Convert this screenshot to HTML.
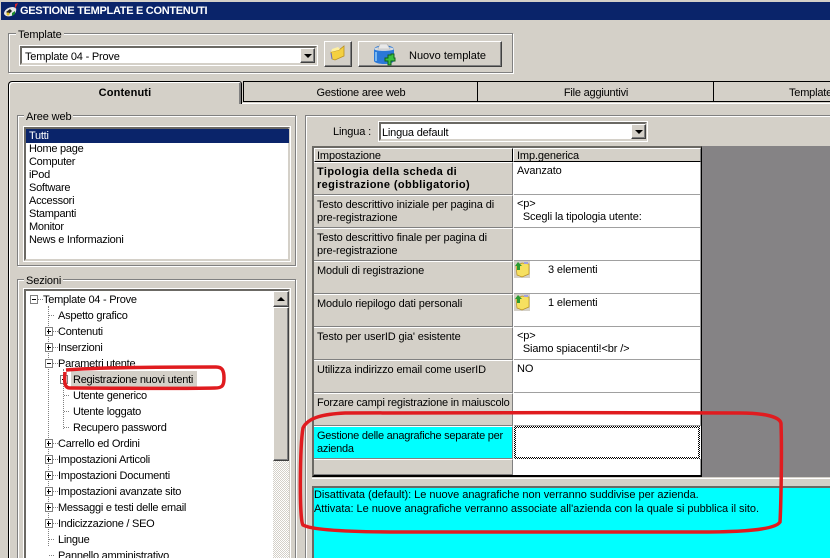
<!DOCTYPE html>
<html><head><meta charset="utf-8"><title>Gestione template e contenuti</title>
<style>
html,body{margin:0;padding:0;width:830px;height:558px;overflow:hidden}
body{background:#d4d0c8;font:11px/13px "Liberation Sans",sans-serif;color:#000;letter-spacing:-.13px}
#r{position:absolute;left:0;top:0;width:830px;height:558px;overflow:hidden;background:#d4d0c8}
#r div,#r span{position:absolute;box-sizing:border-box;white-space:nowrap}
svg{position:absolute;overflow:visible}
#r .g{border:1px solid #808080;box-shadow:inset 1px 1px 0 #fff,1px 1px 0 #fff}
#r .l{background:#d4d0c8;padding:0 2px;height:13px;margin-top:1px}
#r .sunk{background:#fff;border:2px solid;border-color:#6b6964 #d4d0c8 #d4d0c8 #6b6964;outline:1px solid #fff}
#r .btn{background:#d4d0c8;border:1px solid;border-color:#fff #404040 #404040 #fff;box-shadow:inset -1px -1px 0 #808080}
#r .arrow{width:0;height:0;border:4px solid transparent;border-top:4px solid #000;border-bottom:0}
#r .tab{top:81px;height:21px;border-top:1px solid #000;border-left:1px solid #000;border-bottom:1px solid #000;background:#d4d0c8;text-align:center;line-height:22px;letter-spacing:-.2px}
#r .cell{height:33px;padding:3px 3px 0;line-height:13px}
#r .n{left:314px;width:199px;background:#d4d0c8;border-top:1px solid #fff;border-bottom:1px solid #808080;border-right:1px solid #808080}
#r .v{left:514px;width:187px;background:#fff;border-bottom:1px solid #a0a0a0;border-right:1px solid #a0a0a0}
#r .i{left:29px;letter-spacing:-.27px;margin-top:1px}
#r .t{height:16px;line-height:16px;margin-top:1px;letter-spacing:-.25px}
#r .h{width:8px;height:9px;border:1px solid #808080;background:#fff}
#r .h:before{content:"";position:absolute;left:1px;top:3px;width:4px;height:1px;background:#000}
#r .p:after{content:"";position:absolute;left:2px;top:1px;width:1px;height:5px;background:#000}
#r .dh{height:1px;border-top:1px dotted #808080;width:5px}
#r .dv{width:1px;border-left:1px dotted #808080}
</style></head><body><div id="r">

<!-- title bar -->
<div style="left:1px;top:2px;width:829px;height:18px;background:#0a246a"></div>
<svg style="left:3px;top:3px" width="16" height="16" viewBox="0 0 16 16"><path d="M1 10c1-4 5-6 9-6l3 1c1 3-1 7-5 8-3 1-7 0-7-3z" fill="#e8e8e8"/><path d="M3 9l4-3 2 2-3 3z" fill="#222"/><path d="M9 10l3-2 0 3-3 2z" fill="#1a8a2a"/><path d="M12 1l3-1-3 6z" fill="#d8262a"/><circle cx="5" cy="11" r="1.5" fill="#e0c020"/></svg>
<div style="left:20px;top:5px;color:#fff;font-weight:bold;font-size:11px;letter-spacing:-.3px">GESTIONE TEMPLATE E CONTENUTI</div>

<!-- template group -->
<div class="g" style="left:8px;top:33px;width:505px;height:40px"></div>
<div class="l" style="left:16px;top:28px">Template</div>
<div class="sunk" style="left:20px;top:46px;width:297px;height:19px;padding:3px 3px 0;line-height:13px;letter-spacing:-.2px">Template 04 - Prove</div>
<div class="btn" style="left:300px;top:48px;width:15px;height:15px"><div class="arrow" style="left:3px;top:5px"></div></div>

<div class="btn" style="left:324px;top:41px;width:28px;height:26px"></div>
<svg style="left:329px;top:44px" width="18" height="18" viewBox="0 0 18 18"><path d="M2 8l8-2 5-4 0 10-9 4-3-1z" fill="#f4d040" stroke="#b89020" stroke-width=".8"/><path d="M2 8l1-3 6-2 2 2-1 1z" fill="#fff0a0"/><path d="M2 9l1 6" stroke="#6a70c0"/></svg>

<div class="btn" style="left:358px;top:41px;width:144px;height:26px"></div>
<svg style="left:373px;top:42px" width="24" height="24" viewBox="0 0 24 24"><path d="M1 7c2-5 18-5 20 0v12c-2 4-18 4-20 0z" fill="#2a78d8"/><path d="M1 7c2-3 18-3 20 0 0 2-18 3-20 0z" fill="#d8dce0"/><path d="M5 7l2-5h7l3 5z" fill="#e8e8e8" stroke="#b0b0b0" stroke-width=".6"/><path d="M3 10v9" stroke="#7ab8f0" stroke-width="2"/><path d="M15 13h3v-1h3v4h1v3h-4v4h-3v-4h-3v-3h3z" fill="#38c040" stroke="#106018" stroke-width="1"/></svg>
<div style="left:409px;top:50px;letter-spacing:0">Nuovo template</div>

<!-- tab panel -->
<div style="left:8px;top:90px;width:1px;height:468px;background:#000"></div>
<div style="left:9px;top:90px;width:1px;height:468px;background:#fff"></div>
<div class="tab" style="left:243px;width:235px">Gestione aree web</div>
<div class="tab" style="left:477px;width:237px">File aggiuntivi</div>
<div class="tab" style="left:713px;width:120px;text-align:left;padding-left:75px">Template</div>
<div style="left:242px;top:103px;width:588px;height:1px;background:#fff"></div>
<div style="left:8px;top:81px;width:234px;height:23px;background:#d4d0c8;border:1px solid #000;border-bottom:0;border-radius:4px 3px 0 0;box-shadow:inset 1px 1px 0 #fff,inset -2px 0 0 #808080;text-align:center;font-weight:bold;line-height:22px;font-size:11px;letter-spacing:.15px">Contenuti</div>

<!-- Aree web -->
<div class="g" style="left:17px;top:115px;width:279px;height:151px"></div>
<div class="l" style="left:24px;top:110px">Aree web</div>
<div class="sunk" style="left:24px;top:127px;width:266px;height:134px"></div>
<div style="left:26px;top:129px;width:263px;height:14px;background:#0a246a"></div>
<div class="i" style="top:129px;color:#fff">Tutti</div>
<div class="i" style="top:142px">Home page</div>
<div class="i" style="top:155px">Computer</div>
<div class="i" style="top:168px">iPod</div>
<div class="i" style="top:181px">Software</div>
<div class="i" style="top:194px">Accessori</div>
<div class="i" style="top:207px">Stampanti</div>
<div class="i" style="top:220px">Monitor</div>
<div class="i" style="top:233px">News e Informazioni</div>

<!-- Sezioni -->
<div class="g" style="left:17px;top:279px;width:279px;height:290px"></div>
<div class="l" style="left:24px;top:274px">Sezioni</div>
<div class="sunk" style="left:24px;top:289px;width:266px;height:280px"></div>
<div style="left:26px;top:291px;width:248px;height:267px;overflow:hidden">
 <div class="dv" style="left:22px;top:15px;height:240px"></div>
 <div class="dv" style="left:37px;top:78px;height:60px"></div>
 <div class="h" style="left:4px;top:4px"></div><div class="dh" style="left:12px;top:8px"></div>
 <div class="t" style="left:17px;top:0">Template 04 - Prove</div>
 <div class="dh" style="left:23px;top:24px"></div><div class="t" style="left:32px;top:16px">Aspetto grafico</div>
 <div class="h p" style="left:19px;top:36px"></div><div class="dh" style="left:27px;top:40px"></div><div class="t" style="left:32px;top:32px">Contenuti</div>
 <div class="h p" style="left:19px;top:52px"></div><div class="dh" style="left:27px;top:56px"></div><div class="t" style="left:32px;top:48px">Inserzioni</div>
 <div class="h" style="left:19px;top:68px"></div><div class="dh" style="left:27px;top:72px"></div><div class="t" style="left:32px;top:64px">Parametri utente</div>
 <div class="h p" style="left:34px;top:84px"></div>
 <div style="left:45px;top:80px;width:126px;height:16px;background:#d4d0c8"></div>
 <div class="t" style="left:47px;top:80px">Registrazione nuovi utenti</div>
 <div class="dh" style="left:38px;top:104px"></div><div class="t" style="left:47px;top:96px">Utente generico</div>
 <div class="dh" style="left:38px;top:120px"></div><div class="t" style="left:47px;top:112px">Utente loggato</div>
 <div class="dh" style="left:38px;top:136px"></div><div class="t" style="left:47px;top:128px">Recupero password</div>
 <div class="h p" style="left:19px;top:148px"></div><div class="dh" style="left:27px;top:152px"></div><div class="t" style="left:32px;top:144px">Carrello ed Ordini</div>
 <div class="h p" style="left:19px;top:164px"></div><div class="dh" style="left:27px;top:168px"></div><div class="t" style="left:32px;top:160px">Impostazioni Articoli</div>
 <div class="h p" style="left:19px;top:180px"></div><div class="dh" style="left:27px;top:184px"></div><div class="t" style="left:32px;top:176px">Impostazioni Documenti</div>
 <div class="h p" style="left:19px;top:196px"></div><div class="dh" style="left:27px;top:200px"></div><div class="t" style="left:32px;top:192px">Impostazioni avanzate sito</div>
 <div class="h p" style="left:19px;top:212px"></div><div class="dh" style="left:27px;top:216px"></div><div class="t" style="left:32px;top:208px">Messaggi e testi delle email</div>
 <div class="h p" style="left:19px;top:228px"></div><div class="dh" style="left:27px;top:232px"></div><div class="t" style="left:32px;top:224px">Indicizzazione / SEO</div>
 <div class="dh" style="left:23px;top:248px"></div><div class="t" style="left:32px;top:240px">Lingue</div>
 <div class="dh" style="left:23px;top:264px"></div><div class="t" style="left:32px;top:256px">Pannello amministrativo</div>
</div>
<!-- tree scrollbar -->
<div style="left:273px;top:291px;width:16px;height:267px;background-image:repeating-conic-gradient(#fff 0 25%,#d4d0c8 0 50%);background-size:2px 2px"></div>
<div class="btn" style="left:273px;top:291px;width:16px;height:16px"><div style="left:3px;top:5px;width:0;height:0;border:4px solid transparent;border-bottom:4px solid #000;border-top:0"></div></div>
<div class="btn" style="left:273px;top:307px;width:16px;height:154px"></div>

<!-- right panel -->
<div style="left:305px;top:115px;width:525px;height:1px;background:#808080"></div>
<div style="left:305px;top:115px;width:1px;height:443px;background:#808080"></div>
<div style="left:306px;top:116px;width:524px;height:1px;background:#fff"></div>
<div style="left:306px;top:116px;width:1px;height:442px;background:#fff"></div>
<div style="left:333px;top:126px">Lingua :</div>
<div class="sunk" style="left:379px;top:122px;width:268px;height:19px;padding:3px 1px 0;line-height:13px;letter-spacing:-.2px">Lingua default</div>
<div class="btn" style="left:631px;top:124px;width:15px;height:15px"><div class="arrow" style="left:3px;top:5px"></div></div>

<!-- grid -->
<div style="left:702px;top:146px;width:128px;height:331px;background:#858385"></div>
<div style="left:312px;top:146px;width:390px;height:331px;background:#fff;border:solid;border-width:2px 1px 2px 2px;border-color:#6b6964 #000 #000 #6b6964"></div>
<div style="left:314px;top:148px;width:199px;height:14px;background:#d4d0c8;border-top:1px solid #fff;border-left:1px solid #fff;border-right:1px solid #000;border-bottom:1px solid #000;padding-left:2px;line-height:14px">Impostazione</div>
<div style="left:513px;top:148px;width:188px;height:14px;background:#d4d0c8;border-top:1px solid #fff;border-left:1px solid #fff;border-right:1px solid #808080;border-bottom:1px solid #000;padding-left:3px;line-height:14px">Imp.generica</div>

<div class="n cell" style="top:162px;font-weight:bold;letter-spacing:.38px">Tipologia della scheda di<br>registrazione (obbligatorio)</div><div class="v cell" style="top:162px">Avanzato</div>
<div class="n cell" style="top:195px">Testo descrittivo iniziale per pagina di<br>pre-registrazione</div><div class="v cell" style="top:195px;white-space:pre">&lt;p&gt;
  Scegli la tipologia utente:</div>
<div class="n cell" style="top:228px">Testo descrittivo finale per pagina di<br>pre-registrazione</div><div class="v cell" style="top:228px"></div>
<div class="n cell" style="top:261px">Moduli di registrazione</div><div class="v cell" style="top:261px"><span style="left:34px;top:3px">3 elementi</span></div>
<div class="n cell" style="top:294px">Modulo riepilogo dati personali</div><div class="v cell" style="top:294px"><span style="left:34px;top:3px">1 elementi</span></div>
<div class="n cell" style="top:327px">Testo per userID gia' esistente</div><div class="v cell" style="top:327px;white-space:pre">&lt;p&gt;
  Siamo spiacenti!&lt;br /&gt;</div>
<div class="n cell" style="top:360px">Utilizza indirizzo email come userID</div><div class="v cell" style="top:360px">NO</div>
<div class="n cell" style="top:393px;letter-spacing:-.2px">Forzare campi registrazione in maiuscolo</div><div class="v cell" style="top:393px"></div>
<div class="n cell" style="top:426px;background:#00ffff;letter-spacing:-.25px">Gestione delle anagrafiche separate per<br>azienda</div>
<div style="left:514px;top:426px;width:186px;height:33px;background-image:repeating-conic-gradient(#000 0 25%,#fff 0 50%);background-size:2px 2px"></div>
<div style="left:516px;top:428px;width:182px;height:29px;background:#fff"></div>
<div class="n" style="top:459px;height:16px"></div><div class="v" style="top:459px;height:16px;border-bottom:0"></div>

<svg style="left:514px;top:261px" width="16" height="17" viewBox="0 0 16 17"><rect width="16" height="17" fill="#d4d0c8"/><path d="M2 5l6-3 7 1v10l-7 3-5-2z" fill="#f6e060" stroke="#b89020" stroke-width=".7"/><path d="M4 1l-3 4 2 0 0 4 3 0 0-4 2 0z" fill="#2a9a30"/><path d="M10 1h4v2h-4z" fill="#a0a0e0"/></svg>
<svg style="left:514px;top:294px" width="16" height="17" viewBox="0 0 16 17"><rect width="16" height="17" fill="#d4d0c8"/><path d="M2 5l6-3 7 1v10l-7 3-5-2z" fill="#f6e060" stroke="#b89020" stroke-width=".7"/><path d="M4 1l-3 4 2 0 0 4 3 0 0-4 2 0z" fill="#2a9a30"/><path d="M10 1h4v2h-4z" fill="#a0a0e0"/></svg>

<!-- splitter + description -->
<div style="left:312px;top:478px;width:518px;height:1px;background:#fff"></div>
<div style="left:312px;top:486px;width:518px;height:72px;background:#00ffff;border-left:2px solid #6b6964;border-top:2px solid #6b6964"></div>
<div style="left:314px;top:488px;line-height:15px;letter-spacing:-.03px">Disattivata (default): Le nuove anagrafiche non verranno suddivise per azienda.</div>
<div style="left:314px;top:502px;line-height:15px;letter-spacing:-.03px">Attivata: Le nuove anagrafiche verranno associate all'azienda con la quale si pubblica il sito.</div>

<!-- red annotations -->
<svg style="left:0;top:0" width="830" height="558" viewBox="0 0 830 558" fill="none" stroke="#e01b1f" stroke-width="3.5">
<path d="M66 370C100 367 180 367 216 367C222 367 224 370 224 378C224 386 222 388 215 388C170 389 110 388 70 388C65 388 64 384 65 372"/>
<path d="M345 413C430 412 640 413 740 413C765 413 781 417 781 424C782 450 781 505 780 522C775 530 740 532 700 532L400 532C350 532 312 530 303 525C299 520 300 445 303 428C308 417 325 414 345 413Z"/>
</svg>
</div></body></html>
